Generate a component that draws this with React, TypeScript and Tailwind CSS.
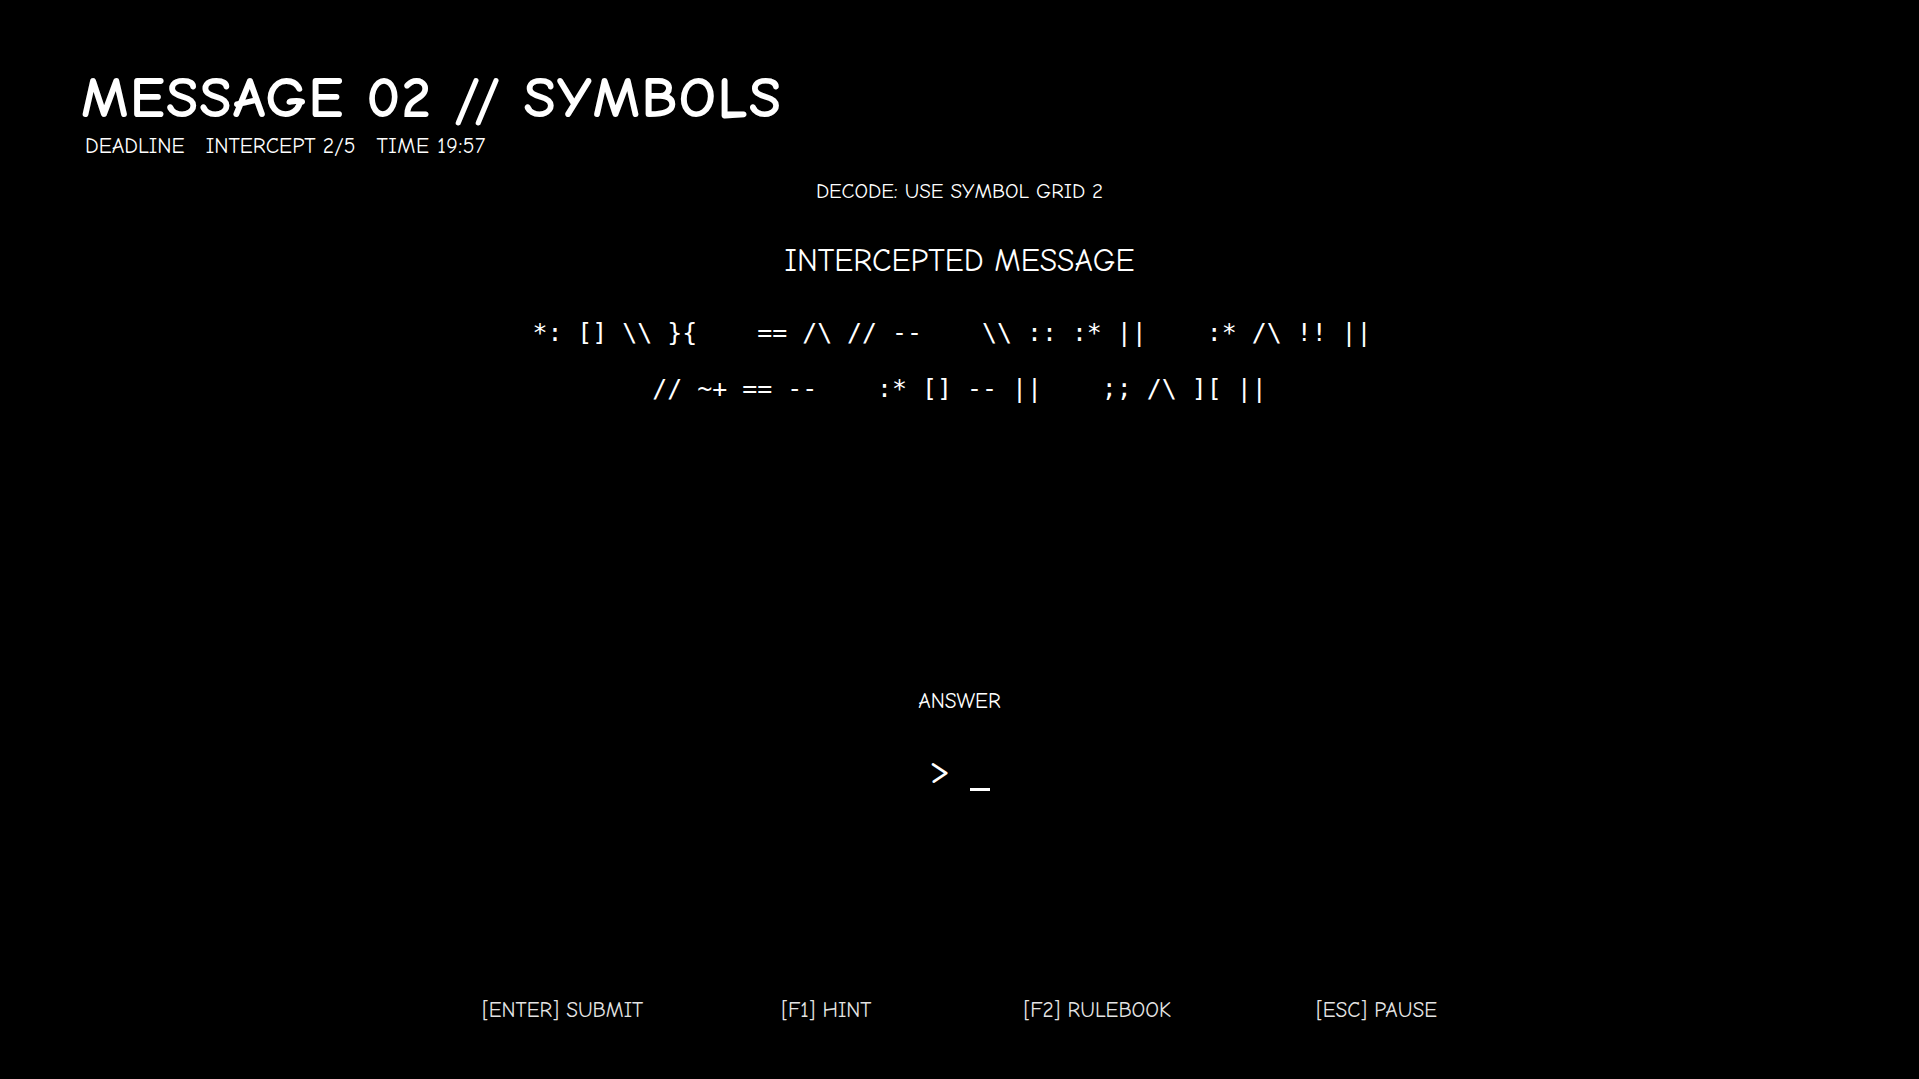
import React from 'react';

// line 1 keeps a trailing space, which nudges it left of centre like the original
const SYMBOL_LINES = [
  '*: [] \\\\ }{    == /\\ // --    \\\\ :: :* ||    :* /\\ !! || ',
  '// ~+ == --    :* [] -- ||    ;; /\\ ][ ||',
];

export default function App() {
  return (
    <div className="w-full h-screen overflow-hidden bg-black text-white font-['Comic_Sans_MS','Comic_Neue','Noto_Sans',sans-serif]">
      {/* header */}
      <div className="pt-[69px] pl-[85px]">
        <h1 className="-ml-[4px] text-[59px] leading-none font-bold tracking-[1.2px]">
          MESSAGE 02 // SYMBOLS
        </h1>
        <div className="mt-[7px] flex gap-[21px] text-[21.7px] leading-none">
          <span>DEADLINE</span>
          <span>INTERCEPT 2/5</span>
          <span className="tracking-[0.5px]">TIME 19:57</span>
        </div>
      </div>

      {/* message */}
      <div className="flex flex-col items-center">
        <div className="mt-[24px] text-[21px] leading-none">DECODE: USE SYMBOL GRID 2</div>
        <div className="mt-[44px] text-[31.6px] leading-none">INTERCEPTED MESSAGE</div>
        <div className="mt-[43.6px] flex flex-col items-center gap-[31.7px] font-['DejaVu_Sans_Mono',monospace] text-[24.9px] leading-none whitespace-pre">
          {SYMBOL_LINES.map((line) => (
            <div key={line}>{line}</div>
          ))}
        </div>

        <div className="mt-[288.5px] text-[21.4px] leading-none">ANSWER</div>
        <div className="mt-[37.3px] flex items-start gap-[20px] h-[40px]">
          <span className="text-[40px] leading-none">&gt;</span>
          <span className="mt-[38.4px] w-[20px] h-[3px] bg-white" />
        </div>

        {/* controls */}
        <div className="mt-[210.7px] flex text-[21.3px] leading-none text-neutral-200">
          <span>[ENTER] SUBMIT</span>
          <span className="ml-[138px]">[F1] HINT</span>
          <span className="ml-[152px]">[F2] RULEBOOK</span>
          <span className="ml-[145px]">[ESC] PAUSE</span>
        </div>
      </div>
    </div>
  );
}
